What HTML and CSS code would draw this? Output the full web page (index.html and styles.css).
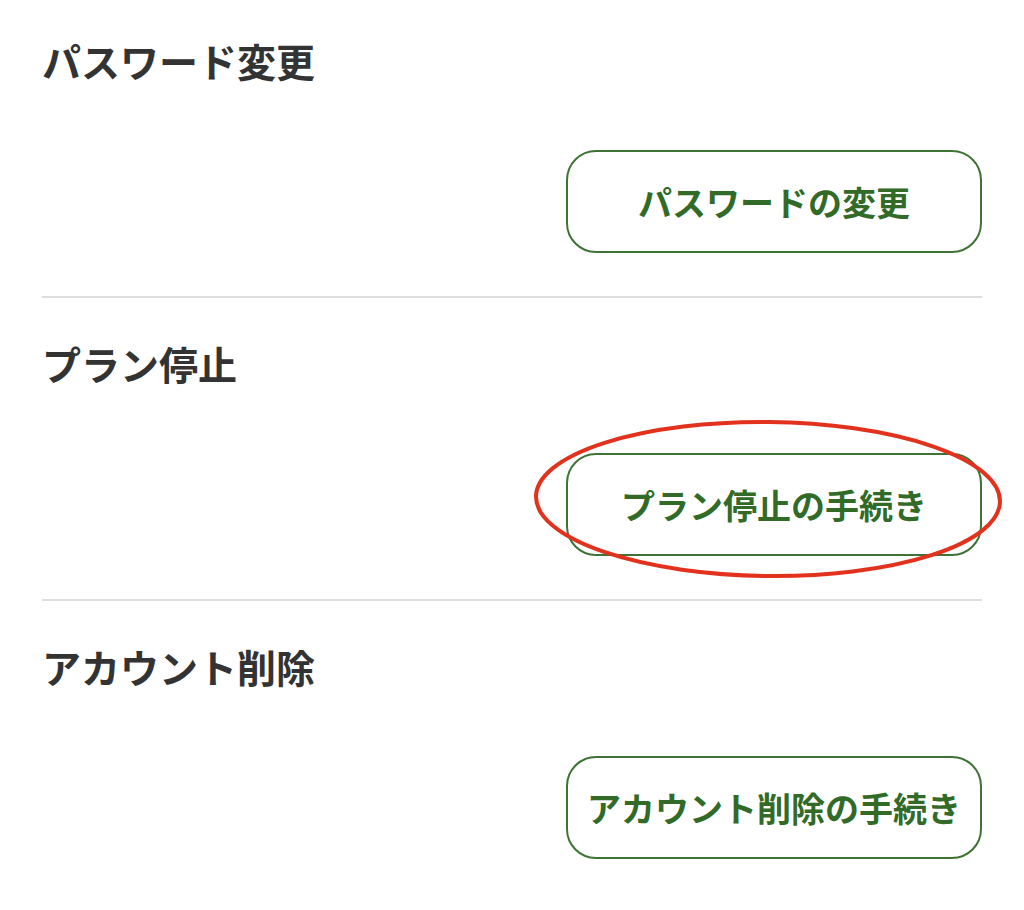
FILE: index.html
```html
<!DOCTYPE html>
<html lang="ja">
<head>
<meta charset="utf-8">
<link rel="stylesheet" href="styles.css">
</head>
<body>
<div class="page">
  <section class="section first">
    <h2 class="title">パスワード変更</h2>
    <div class="actions"><button class="btn">パスワードの変更</button></div>
  </section>
  <section class="section">
    <h2 class="title">プラン停止</h2>
    <div class="actions">
      <div class="mark-wrap">
        <button class="btn">プラン停止の手続き</button>
        <svg class="mark" width="480" height="170" viewBox="0 0 480 170">
          <ellipse cx="236" cy="82" rx="232" ry="77" fill="none" stroke="#e2321d" stroke-width="4" transform="rotate(0.6 236 82)"/>
        </svg>
      </div>
    </div>
  </section>
  <section class="section last">
    <h2 class="title">アカウント削除</h2>
    <div class="actions"><button class="btn">アカウント削除の手続き</button></div>
  </section>
</div>
</body>
</html>
```

FILE: styles.css
```css
html, body {
  margin: 0;
  padding: 0;
  background: #ffffff;
}
body {
  font-family: "Noto Sans CJK JP", "Noto Sans", sans-serif;
}
.page {
  width: 940px;
  margin-left: 42px;
}
.section {
  padding: 37px 0 43px;
  border-bottom: 2px solid #dedede;
}
.section.first {
  padding-top: 32px;
}
.section.last {
  border-bottom: none;
}
.title {
  margin: 0;
  font-size: 39px;
  line-height: 56px;
  font-weight: 700;
  color: #333333;
}
.actions {
  display: flex;
  justify-content: flex-end;
  margin-top: 62px;
}
.btn {
  box-sizing: border-box;
  width: 416px;
  height: 103px;
  border: 2.5px solid #3f7235;
  border-radius: 30px;
  background: #ffffff;
  color: #316b27;
  font-family: "Noto Sans CJK JP", "Noto Sans", sans-serif;
  font-size: 34px;
  font-weight: 700;
  padding: 0;
  display: flex;
  align-items: center;
  justify-content: center;
}
.mark-wrap {
  position: relative;
}
.mark {
  position: absolute;
  left: -34px;
  top: -36px;
  pointer-events: none;
}
```
